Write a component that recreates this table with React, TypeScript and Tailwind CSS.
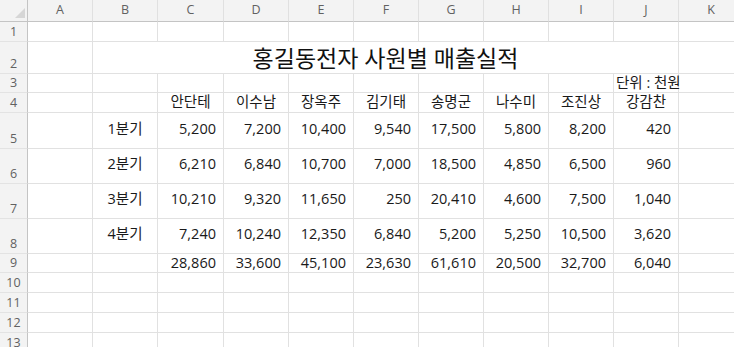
import React from "react";

const cols = ["A", "B", "C", "D", "E", "F", "G", "H", "I", "J", "K"];
const names = ["안단테", "이수남", "장옥주", "김기태", "송명군", "나수미", "조진상", "강감찬"];
const data: string[][] = [
  ["5,200", "7,200", "10,400", "9,540", "17,500", "5,800", "8,200", "420"],
  ["6,210", "6,840", "10,700", "7,000", "18,500", "4,850", "6,500", "960"],
  ["10,210", "9,320", "11,650", "250", "20,410", "4,600", "7,500", "1,040"],
  ["7,240", "10,240", "12,350", "6,840", "5,200", "5,250", "10,500", "3,620"],
];
const totals = ["28,860", "33,600", "45,100", "23,630", "61,610", "20,500", "32,700", "6,040"];

const font = { fontFamily: '"Open Sans", "Noto Sans CJK KR", sans-serif' };

function RowHead({ n }: { n: number }) {
  return (
    <div className="bg-[#f3f3f3] border-b border-r border-b-[#e3e3e3] border-r-[#c4c4c4] flex items-end justify-center pb-[1px] text-[12.5px] leading-none text-[#616161]">
      <span className="pb-[2px]">{n}</span>
    </div>
  );
}

function Cell({ children, align = "right", className = "" }: { children?: React.ReactNode; align?: "right" | "center" | "left"; className?: string }) {
  const j = align === "right" ? "justify-end pr-[7px]" : align === "center" ? "justify-center" : "justify-start pl-[2px]";
  return (
    <div className={`border-b border-r border-[#e1e1e1] flex items-center whitespace-nowrap text-[14.5px] leading-none text-[#1a1a1a] ${j} ${className}`}>
      {children}
    </div>
  );
}

export default function App() {
  const rows: React.ReactNode[] = [];
  // header row
  rows.push(
    <div key="corner" className="relative bg-[#f3f3f3] border-b border-r border-b-[#c4c4c4] border-r-[#c4c4c4]">
      <svg className="absolute left-[15px] top-[8px]" width="10" height="10" viewBox="0 0 10 10">
        <polygon points="10,0 10,10 0,10" fill="#d6d6d6" />
      </svg>
    </div>
  );
  cols.forEach((c) =>
    rows.push(
      <div key={"h" + c} className="bg-[#f3f3f3] border-b border-r border-b-[#c4c4c4] border-r-[#e0e0e0] flex items-center justify-center text-[12.5px] text-[#616161]">
        {c}
      </div>
    )
  );
  const empty = (r: number, from: number, to: number) => {
    const out: React.ReactNode[] = [];
    for (let i = from; i < to; i++) out.push(<Cell key={`e${r}-${i}`} />);
    return out;
  };
  // row 1
  rows.push(<RowHead key="r1" n={1} />, ...empty(1, 0, 11));
  // row 2
  rows.push(
    <RowHead key="r2" n={2} />,
    <Cell key="2a" />,
    <div key="title" className="col-span-9 border-b border-r border-[#e1e1e1] flex items-end justify-center pb-[1px] text-[23px] leading-none text-[#111] whitespace-nowrap">
      <span className="pb-[2px]">홍길동전자 사원별 매출실적</span>
    </div>,
    <Cell key="2k" />
  );
  // row 3
  rows.push(
    <RowHead key="r3" n={3} />,
    ...empty(3, 0, 9),
    <Cell key="3j" align="left" className="overflow-visible">단위 : 천원</Cell>,
    <Cell key="3k" />
  );
  // row 4
  rows.push(<RowHead key="r4" n={4} />, <Cell key="4a" />, <Cell key="4b" />);
  names.forEach((n) => rows.push(<Cell key={"n" + n} align="center">{n}</Cell>));
  rows.push(<Cell key="4k" />);
  // rows 5-8
  data.forEach((d, i) => {
    const r = 5 + i;
    rows.push(<RowHead key={"r" + r} n={r} />, <Cell key={r + "a"} />, <Cell key={r + "b"} align="center"><span className="-mt-[3px]">{i + 1}분기</span></Cell>);
    d.forEach((v, k) => rows.push(<Cell key={r + "v" + k}><span className="-mt-[3px]">{v}</span></Cell>));
    rows.push(<Cell key={r + "k"} />);
  });
  // row 9
  rows.push(<RowHead key="r9" n={9} />, <Cell key="9a" />, <Cell key="9b" />);
  totals.forEach((v, k) => rows.push(<Cell key={"t" + k}>{v}</Cell>));
  rows.push(<Cell key="9k" />);
  for (let r = 10; r <= 14; r++) rows.push(<RowHead key={"r" + r} n={r} />, ...empty(r, 0, 11));

  return (
    <div className="w-[734px] h-[347px] overflow-hidden bg-white" style={font}>
      <div className="grid grid-cols-[28px_65px_65px_66px_65px_65px_65px_65px_65px_65px_65px_65px] grid-rows-[22px_20px_32px_19px_20px_36px_35px_35px_35px_19px_20px_20px_20px_20px_20px] w-[744px]">
        {rows}
      </div>
    </div>
  );
}
